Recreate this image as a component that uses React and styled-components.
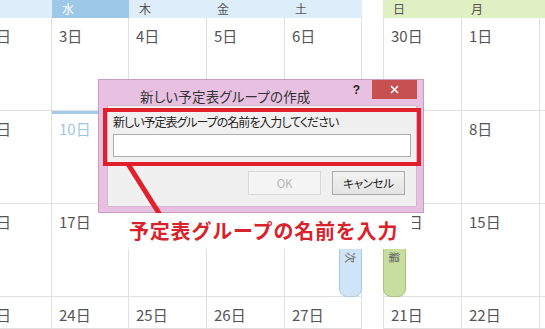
import React from "react";
import styled, { createGlobalStyle } from "styled-components";

const GlobalStyle = createGlobalStyle`
  html, body {
    margin: 0;
    padding: 0;
    overflow: hidden;
    background: #fff;
  }
`;

const JP = `"Noto Sans CJK JP", "Noto Sans", sans-serif`;

const Page = styled.div`
  position: relative;
  width: 545px;
  height: 329px;
  overflow: hidden;
  display: flex;
  gap: 21px;
  font-family: ${JP};
  background: #fff;
`;

const Calendar = styled.div`
  display: grid;
  grid-template-columns: ${({ $cols }) => $cols};
  grid-template-rows: 18px repeat(3, 93px) 1fr;
  height: 100%;
  flex: ${({ $grow }) => ($grow ? "1" : "none")};
`;

const HeadCell = styled.div`
  background: ${({ $bg }) => $bg};
  color: ${({ $fg }) => $fg};
  font-size: 12px;
  line-height: 18px;
  padding-left: 10px;
`;

const DayCell = styled.div`
  position: relative;
  box-sizing: border-box;
  border-bottom: 1px solid #e0e0e0;
  ${({ $side }) =>
    $side === "left"
      ? "border-right: 1px solid #e0e0e0;"
      : "border-left: 1px solid #e0e0e0;"}
  box-shadow: ${({ $today }) => ($today ? "inset 0 3px 0 #a3cae7" : "none")};
  padding: 7px 0 0 ${({ $edge }) => ($edge ? "0" : "7px")};
`;

const DayNum = styled.div`
  font-size: 15px;
  line-height: 22px;
  color: ${({ $today }) => ($today ? "#9fc7e4" : "#555")};
  white-space: nowrap;
  ${({ $edge }) =>
    $edge &&
    `
    width: 11px;
    display: flex;
    justify-content: flex-end;
  `}
`;

const EventBar = styled.div`
  position: absolute;
  top: 10px;
  bottom: -1px;
  ${({ $align }) => ($align === "right" ? "right: -1px;" : "left: -1px;")}
  width: 23px;
  box-sizing: border-box;
  background: ${({ $bg }) => $bg};
  border: 1px solid ${({ $line }) => $line};
  border-radius: 0 0 8px 8px;
  writing-mode: vertical-rl;
  text-orientation: sideways;
  font-size: 11px;
  line-height: 21px;
  color: #666;
  padding-top: 37px;
`;

/* dialog */

const Dialog = styled.div`
  position: absolute;
  left: 98px;
  top: 79px;
  width: 326px;
  height: 134px;
  box-sizing: border-box;
  display: flex;
  flex-direction: column;
  background: #e8c1e2;
  border: 1px solid #c89cc2;
  padding: 0 6px 5px 8px;
  z-index: 2;
`;

const TitleBar = styled.div`
  height: 25px;
  display: flex;
  align-items: flex-start;
`;

const Title = styled.div`
  font-size: 13.5px;
  line-height: 16px;
  margin-top: 8px;
  padding-left: 33px;
  color: #333;
  font-feature-settings: "palt";
  letter-spacing: 0.2px;
`;

const Help = styled.div`
  margin-left: auto;
  margin-right: 12px;
  margin-top: 3px;
  font-family: "Liberation Sans", sans-serif;
  font-weight: bold;
  font-size: 12px;
  color: #222;
`;

const CloseBtn = styled.div`
  width: 45px;
  height: 19px;
  background: #c75050;
  color: #fff;
  display: flex;
  align-items: center;
  justify-content: center;
`;

const Client = styled.div`
  flex: 1;
  background: #f0f0f0;
  border: 1px solid #d6b3d0;
  padding: 8px 5px 0 5px;
  display: flex;
  flex-direction: column;
`;

const Label = styled.div`
  font-size: 12px;
  line-height: 16px;
  color: #222;
  font-feature-settings: "palt";
  letter-spacing: -1px;
`;

const TextInput = styled.div`
  margin-top: 4px;
  height: 23px;
  box-sizing: border-box;
  background: #fff;
  border: 1px solid #abadb3;
`;

const ButtonRow = styled.div`
  margin-top: 14px;
  margin-right: 6px;
  display: flex;
  justify-content: flex-end;
  gap: 11px;
`;

const Button = styled.div`
  width: 73px;
  height: 24px;
  box-sizing: border-box;
  display: flex;
  align-items: center;
  justify-content: center;
  font-size: 11.5px;
  font-feature-settings: "palt";
  letter-spacing: -0.3px;
  color: ${({ $disabled }) => ($disabled ? "#b5b5b5" : "#222")};
  background: ${({ $disabled }) =>
    $disabled ? "#f4f4f4" : "linear-gradient(#f2f2f2, #e3e3e3)"};
  border: 1px solid ${({ $disabled }) => ($disabled ? "#d9d9d9" : "#acacac")};
`;

/* annotation */

const RedFrame = styled.div`
  position: absolute;
  left: 103px;
  top: 108px;
  width: 318px;
  height: 58px;
  box-sizing: border-box;
  border: 4px solid #e1202b;
  z-index: 3;
`;

const Pointer = styled.svg`
  position: absolute;
  left: 0;
  top: 0;
  z-index: 3;
  pointer-events: none;
`;

const Caption = styled.div`
  position: absolute;
  left: 128px;
  top: 213px;
  width: 284px;
  height: 36px;
  background: #fff;
  z-index: 4;
  color: #d8232c;
  font-weight: 700;
  font-size: 20px;
  line-height: 36px;
  padding-left: 1px;
  box-sizing: border-box;
  letter-spacing: 0.8px;
  white-space: nowrap;
`;

const leftHead = [
  { t: "", bg: "#ddedf9" },
  { t: "水", bg: "#9dc8e7", fg: "#fff" },
  { t: "木", bg: "#ddedf9" },
  { t: "金", bg: "#ddedf9" },
  { t: "土", bg: "#ddedf9" },
];
const rightHead = ["日", "月", "火"];

const leftWeeks = [
  [2, 3, 4, 5, 6],
  [9, 10, 11, 12, 13],
  [16, 17, 18, 19, 20],
  [23, 24, 25, 26, 27],
];
const rightWeeks = [
  [30, 1, 2],
  [7, 8, 9],
  [14, 15, 16],
  [21, 22, 23],
];

export default function App() {
  return (
    <>
      <GlobalStyle />
      <Page>
        <Calendar $cols="52px 77px 78px 78px 77px">
          {leftHead.map((h, i) => (
            <HeadCell key={i} $bg={h.bg} $fg={h.fg || "#555"}>
              {h.t}
            </HeadCell>
          ))}
          {leftWeeks.map((week, w) =>
            week.map((d, i) => {
              const today = w === 1 && i === 1;
              return (
                <DayCell key={`${w}-${i}`} $side="left" $edge={i === 0} $today={today}>
                  <DayNum $edge={i === 0} $today={today}>
                    {d}日
                  </DayNum>
                  {w === 2 && i === 4 && (
                    <EventBar $align="right" $bg="#cfe5f7" $line="#a6cbe7">
                      次
                    </EventBar>
                  )}
                </DayCell>
              );
            })
          )}
        </Calendar>

        <Calendar $cols="78px 78px 78px" $grow>
          {rightHead.map((t) => (
            <HeadCell key={t} $bg="#dff0c2" $fg="#555">
              {t}
            </HeadCell>
          ))}
          {rightWeeks.map((week, w) =>
            week.map((d, i) => (
              <DayCell key={`${w}-${i}`} $side="right">
                <DayNum>{d}日</DayNum>
                {w === 2 && i === 0 && (
                  <EventBar $align="left" $bg="#c8de9f" $line="#a7c47c">
                    編
                  </EventBar>
                )}
              </DayCell>
            ))
          )}
        </Calendar>

        <Dialog>
          <TitleBar>
            <Title>新しい予定表グループの作成</Title>
            <Help>?</Help>
            <CloseBtn>
              <svg width="9" height="9" viewBox="0 0 9 9">
                <path d="M1 1L8 8M8 1L1 8" stroke="#fff" strokeWidth="1.6" />
              </svg>
            </CloseBtn>
          </TitleBar>
          <Client>
            <Label>新しい予定表グループの名前を入力してください</Label>
            <TextInput />
            <ButtonRow>
              <Button $disabled>OK</Button>
              <Button>キャンセル</Button>
            </ButtonRow>
          </Client>
        </Dialog>

        <RedFrame />
        <Pointer width="545" height="329" viewBox="0 0 545 329">
          <line x1="128" y1="164" x2="162" y2="218" stroke="#e1202b" strokeWidth="5" />
        </Pointer>
        <Caption>予定表グループの名前を入力</Caption>
      </Page>
    </>
  );
}
